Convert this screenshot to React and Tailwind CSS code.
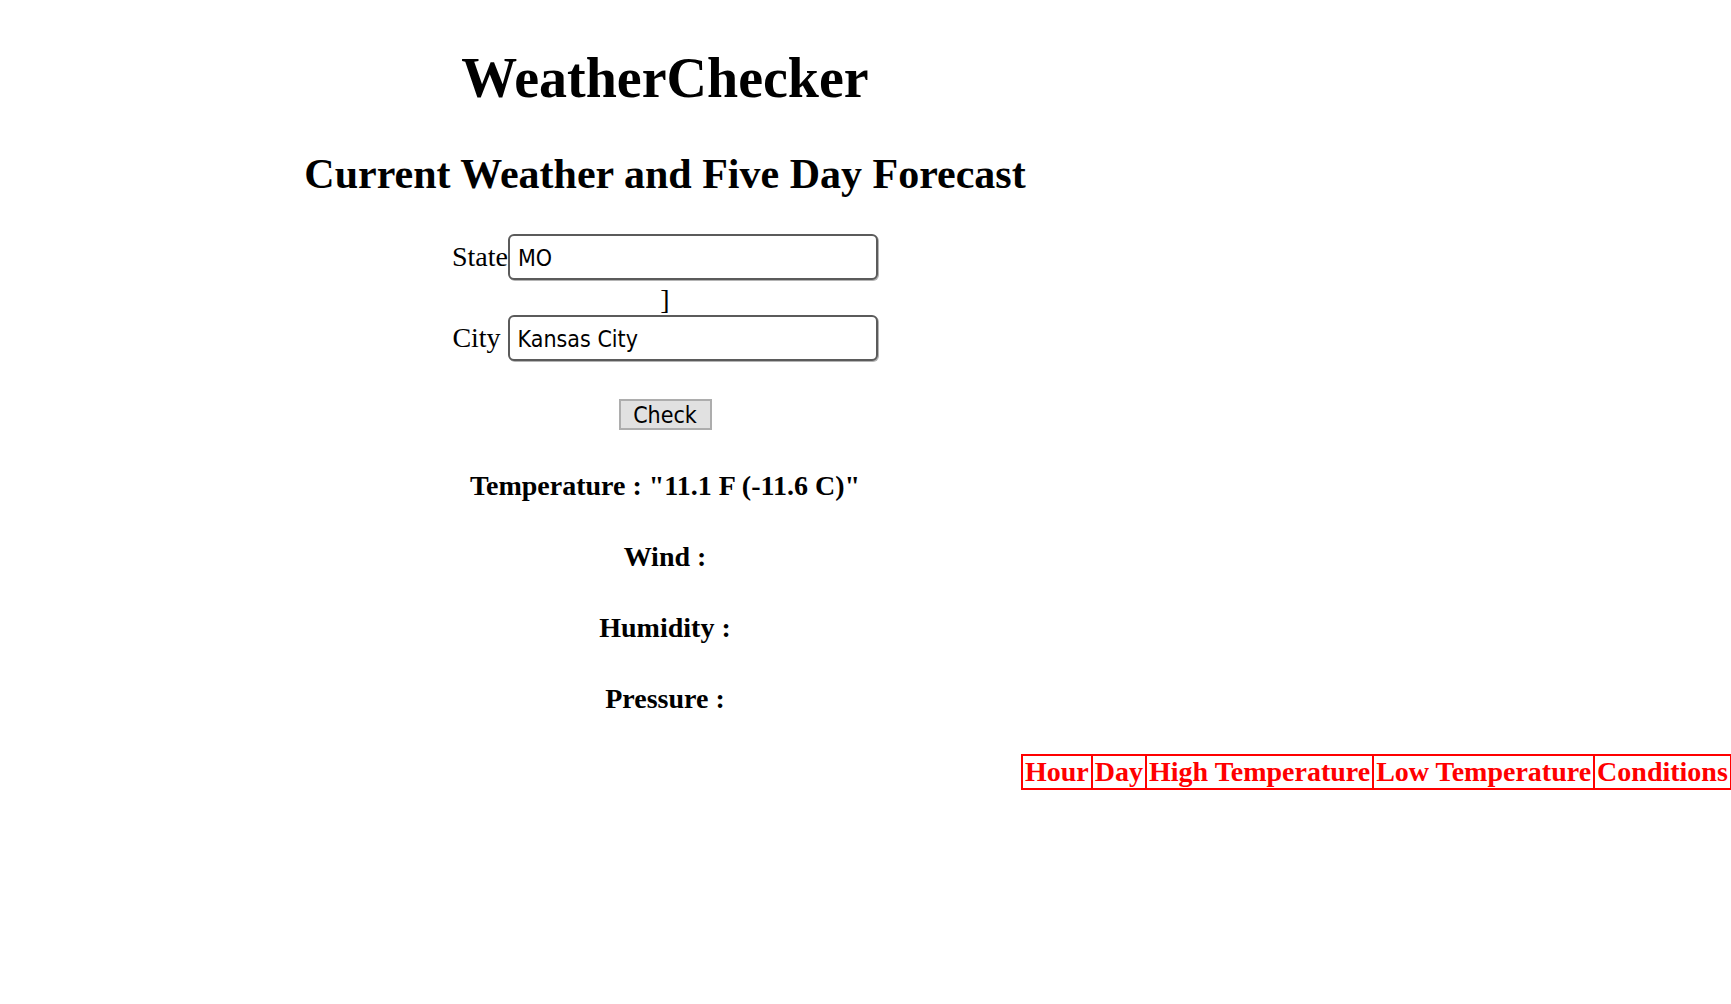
import React, { useState } from 'react';

export default function App() {
  const [state, setState] = useState('MO');
  const [city, setCity] = useState('Kansas City');

  return (
    <div className="min-h-screen bg-white text-black font-['Liberation_Serif','Times_New_Roman',serif] text-[28px]">
      {/* main column, centered on its own width */}
      <div className="w-[1330px] pt-[46px] text-center">
        <h1 className="h-[64px] text-[56px] leading-[64px] font-bold">WeatherChecker</h1>
        <h2 className="mt-[40px] h-[48px] text-[42px] leading-[48px] font-bold">
          Current Weather and Five Day Forecast
        </h2>

        <div className="mt-[36px] flex h-[46px] items-center justify-center">
          <span className="leading-[32px]">State</span>
          <input
            value={state}
            onChange={e => setState(e.target.value)}
            className="h-[46px] w-[370px] rounded-[6px] border-2 border-[#5b5b5b] bg-white pl-[8px] pt-[2px] text-[23px] text-black shadow-[1px_1px_0_#b4b4b4] outline-none font-['DejaVu_Sans_Condensed','DejaVu_Sans',sans-serif]"
          />
        </div>
        <div className="h-[35px] leading-[39px]">]</div>
        <div className="flex h-[46px] items-center justify-center">
          <span className="leading-[32px]">City&nbsp;</span>
          <input
            value={city}
            onChange={e => setCity(e.target.value)}
            className="h-[46px] w-[370px] rounded-[6px] border-2 border-[#5b5b5b] bg-white pl-[8px] pt-[2px] text-[23px] text-black shadow-[1px_1px_0_#b4b4b4] outline-none font-['DejaVu_Sans_Condensed','DejaVu_Sans',sans-serif]"
          />
        </div>

        <div className="mt-[38px] flex justify-center">
          <button className="h-[31px] w-[93px] border-2 border-[#adadad] bg-[#e1e1e1] pt-[1px] text-[23px] leading-[27px] text-black font-['DejaVu_Sans_Condensed','DejaVu_Sans',sans-serif]">
            Check
          </button>
        </div>

        <div className="mt-[20px] font-bold">
          <h4 className="h-[71px] leading-[71px]">Temperature : "11.1 F (-11.6 C)"</h4>
          <h4 className="h-[71px] leading-[71px]">Wind : </h4>
          <h4 className="h-[71px] leading-[71px]">Humidity : </h4>
          <h4 className="h-[71px] leading-[71px]">Pressure : </h4>
        </div>
      </div>

      {/* forecast table */}
      <div className="mt-[20px] pl-[1021px]">
        <table className="border-collapse border-2 border-[#ff0000] text-[#ff0000]">
          <thead>
            <tr>
              {['Hour', 'Day', 'High Temperature', 'Low Temperature', 'Conditions'].map(h => (
                <th key={h} className="border-2 border-[#ff0000] px-[2px] py-0 text-[28px] leading-[32px] font-bold whitespace-nowrap">
                  {h}
                </th>
              ))}
            </tr>
          </thead>
          <tbody></tbody>
        </table>
      </div>
    </div>
  );
}
